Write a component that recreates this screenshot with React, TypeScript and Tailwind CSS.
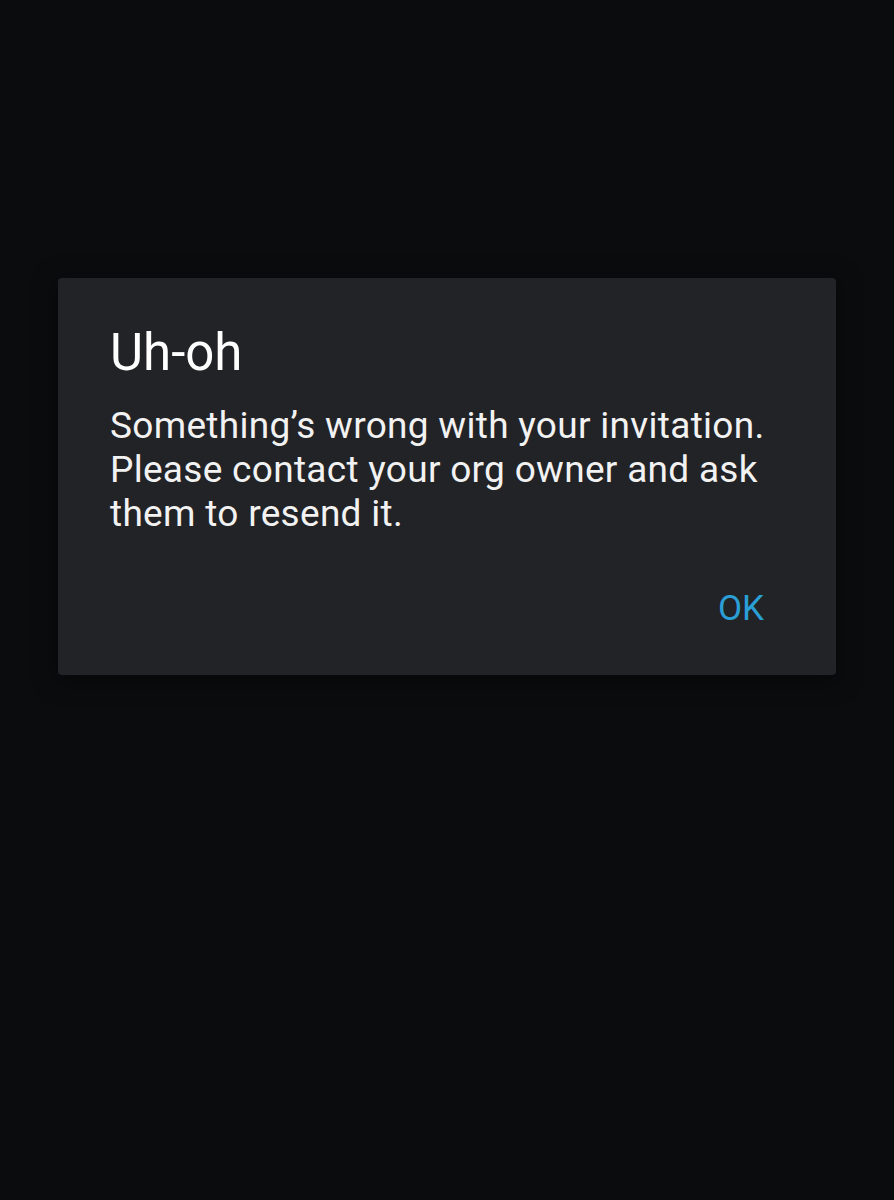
export default function App() {
  return (
    <div className="min-h-[1200px] w-full bg-[#0b0c0e] pt-[278px] px-[58px] font-['Roboto',sans-serif]">
      <div className="w-[778px] h-[397px] rounded-[4px] bg-[#222327] shadow-[0_4px_24px_rgba(0,0,0,0.5)] flex flex-col pl-[52px] pr-[40px]">
        <h2 className="mt-[46px] text-[51px] leading-[58px] text-white">Uh-oh</h2>
        <p className="mt-[22px] text-[37px] leading-[44px] tracking-[0.3px] text-[#f2f2f2]">
          Something’s wrong with your invitation. Please contact your org owner and ask them to resend it.
        </p>
        <div className="mt-auto mb-[44px] pr-[32px] flex justify-end">
          <button className="text-[35px] leading-[44px] text-[#2a9fd6]">OK</button>
        </div>
      </div>
    </div>
  );
}
